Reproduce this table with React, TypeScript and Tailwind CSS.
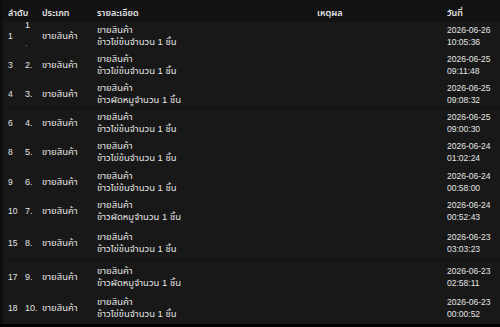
import React from "react";

type Row = {
  id: number;
  no: string;
  detail: string;
  date: string;
  time: string;
  h: string;
};

const rows: Row[] = [
  { id: 1, no: "1", detail: "ข้าวไข่ข้นจำนวน 1 ชิ้น", date: "2026-06-26", time: "10:05:36", h: "h-[28px]" },
  { id: 3, no: "2.", detail: "ข้าวไข่ข้นจำนวน 1 ชิ้น", date: "2026-06-25", time: "09:11:48", h: "h-[29px]" },
  { id: 4, no: "3.", detail: "ข้าวผัดหมูจำนวน 1 ชิ้น", date: "2026-06-25", time: "09:08:32", h: "h-[29px]" },
  { id: 6, no: "4.", detail: "ข้าวไข่ข้นจำนวน 1 ชิ้น", date: "2026-06-25", time: "09:00:30", h: "h-[29px]" },
  { id: 8, no: "5.", detail: "ข้าวไข่ข้นจำนวน 1 ชิ้น", date: "2026-06-24", time: "01:02:24", h: "h-[30px]" },
  { id: 9, no: "6.", detail: "ข้าวไข่ข้นจำนวน 1 ชิ้น", date: "2026-06-24", time: "00:58:00", h: "h-[29px]" },
  { id: 10, no: "7.", detail: "ข้าวผัดหมูจำนวน 1 ชิ้น", date: "2026-06-24", time: "00:52:43", h: "h-[30px]" },
  { id: 15, no: "8.", detail: "ข้าวไข่ข้นจำนวน 1 ชิ้น", date: "2026-06-23", time: "03:03:23", h: "h-[34px]" },
  { id: 17, no: "9.", detail: "ข้าวผัดหมูจำนวน 1 ชิ้น", date: "2026-06-23", time: "02:58:11", h: "h-[32px]" },
  { id: 18, no: "10.", detail: "ข้าวไข่ข้นจำนวน 1 ชิ้น", date: "2026-06-23", time: "00:00:52", h: "h-[32px]" },
];

export default function App() {
  return (
    <div
      className="w-[500px] h-[327px] bg-black overflow-hidden text-[8.5px] leading-[12px] text-[#e4e4e4]"
      style={{ fontFamily: '"Liberation Sans", "Noto Sans Thai", "Noto Sans", sans-serif' }}
    >
      <div className="h-[324px] bg-[#181818] border-l-[3px] border-[#0d0d0d]">
        {/* header */}
        <div className="flex items-center h-[22px] pt-[3px] bg-[#121212] font-semibold text-[9px]">
          <div className="w-[36px] pl-[5px]">ลำดับ</div>
          <div className="w-[58px] pl-[3px]">ประเภท</div>
          <div className="w-[220px]">รายละเอียด</div>
          <div className="w-[130px]">เหตุผล</div>
          <div className="flex-1">วันที่</div>
        </div>

        {/* rows */}
        {rows.map((r, i) => (
          <div
            key={r.id}
            className={
              "flex items-center " +
              r.h +
              (i === 3 || i === 8 ? " border-t border-[#0f0f0f]" : "")
            }
          >
            <div className="w-[22px] pl-[5px]">{r.id}</div>
            <div className="w-[14px] text-[9px]">
              {r.no === "1" ? (
                <div className="flex flex-col leading-[10px] -mt-[4px]">
                  <span>1</span>
                  <span className="h-[8px]"></span>
                  <span className="text-[#888]">.</span>
                </div>
              ) : (
                r.no
              )}
            </div>
            <div className="w-[58px] pl-[3px] text-[9.5px]">ขายสินค้า</div>
            <div className="w-[220px] flex flex-col text-[9.5px]">
              <span>ขายสินค้า</span>
              <span>{r.detail}</span>
            </div>
            <div className="w-[130px]"></div>
            <div className="flex-1 flex flex-col">
              <span>{r.date}</span>
              <span>{r.time}</span>
            </div>
          </div>
        ))}
      </div>
    </div>
  );
}
